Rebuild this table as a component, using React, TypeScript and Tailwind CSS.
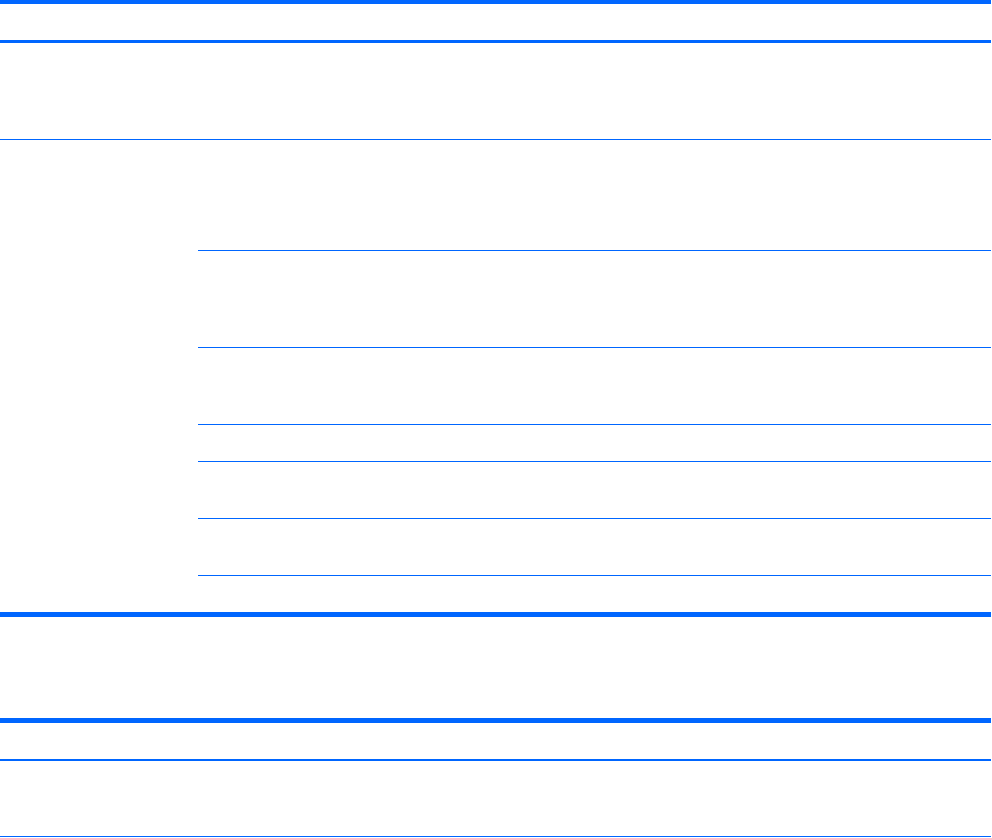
import React from 'react'

const subRows = [110, 96, 76, 36, 56, 56]

const App: React.FC = () => {
  return (
    <div className="w-[992px] h-[838px] bg-white overflow-hidden" style={{ fontFamily: '"Liberation Sans", Arial, sans-serif' }}>
      <div className="w-[991px]">
        {/* first table */}
        <div className="border-t-4 border-b-[3px] border-[#0066ff] h-[43px]" />
        <div className="h-[97px] border-b border-[#0066ff]" />
        <div className="flex">
          <div className="w-[198px] shrink-0" />
          <div className="flex-1 flex flex-col">
            {subRows.map((h, i) => (
              <div key={i} className="border-b border-[#0066ff]" style={{ height: h + 1 }} />
            ))}
            <div className="h-[36px]" />
          </div>
        </div>
        <div className="h-[5px] bg-[#0066ff]" />

        <div className="h-[101px]" />

        {/* second table */}
        <div className="h-[5px] bg-[#0066ff]" />
        <div className="h-[38px] border-b-2 border-[#0066ff]" />
        <div className="h-[76px] border-b border-[#0066ff]" />
      </div>
    </div>
  )
}

export default App
